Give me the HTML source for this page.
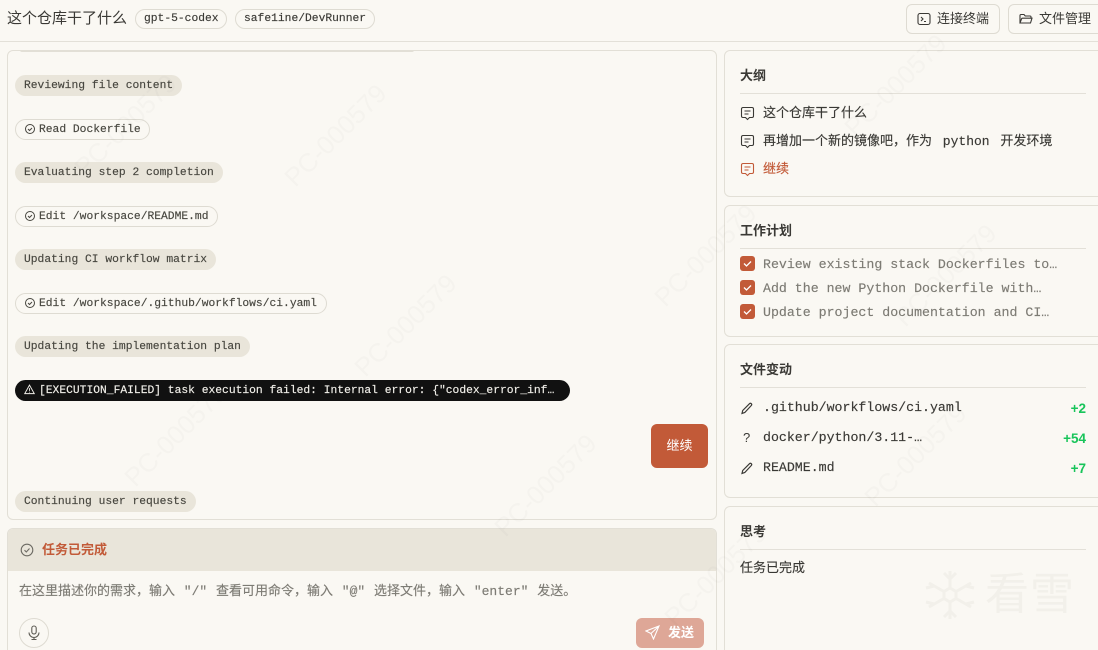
<!DOCTYPE html>
<html lang="zh">
<head>
<meta charset="utf-8">
<title>这个仓库干了什么</title>
<style>
html,body{margin:0;padding:0;width:1098px;height:650px;overflow:hidden;background:#faf8f3}
body{color:#3a3935;font-family:"Liberation Sans","Noto Sans CJK SC",sans-serif}
#root{position:relative;width:1098px;height:650px;overflow:hidden;background:#faf8f3}
*{box-sizing:border-box}
.a{position:absolute}
.t{position:absolute;white-space:pre;line-height:20px}
.m{font-family:"Liberation Mono","Noto Sans CJK SC",monospace;-webkit-text-stroke:.15px currentColor}
.panel{position:absolute;background:#faf8f3;border:1px solid #e2dfd6;border-radius:6px}
.pill{position:absolute;height:21px;border-radius:11px;font:11.3px/23px "Liberation Mono",monospace;white-space:pre;padding-left:9px;color:#47463f;-webkit-text-stroke:.15px currentColor}
.g{background:#e9e5da}
.o{border:1px solid #dedbd2;background:#faf8f3;line-height:21px;padding-left:23px}
.o svg{position:absolute;left:8px;top:3px}
.h{position:absolute;left:740px;font-size:13px;font-weight:bold;line-height:20px;color:#3a3935}
.hr{position:absolute;left:740px;width:346px;height:1px;background:#e3e0d8}
.r{position:absolute;left:763px;font:13.25px/20px "Liberation Mono","Noto Sans CJK SC",monospace;white-space:pre;-webkit-text-stroke:.15px currentColor}
.gr{color:#7d7b74}
.chk{position:absolute;left:740px;width:15px;height:15px;background:#c25a38;border-radius:3px}
.num{position:absolute;right:12px;font:bold 13.5px/20px "Liberation Sans",sans-serif;color:#18c45a}
.btn{position:absolute;top:4px;height:30px;background:#faf8f3;border:1px solid #dedbd2;border-radius:6px;font-size:13px;line-height:28px;color:#3a3935;white-space:pre}
.wm{position:absolute;font:26px "Liberation Sans",sans-serif;color:rgba(90,80,60,.028);transform:rotate(-45deg);white-space:pre;z-index:5;pointer-events:none}
</style>
</head>
<body>
<div id="root">
<!-- header -->
<div class="t" style="left:7px;top:9px;font-size:15px">这个仓库干了什么</div>
<div class="a m" style="left:135px;top:9px;width:92px;height:20px;border:1px solid #dedbd2;border-radius:10px;font-size:11.3px;line-height:19px;padding-left:8px;white-space:pre">gpt-5-codex</div>
<div class="a m" style="left:235px;top:9px;width:140px;height:20px;border:1px solid #dedbd2;border-radius:10px;font-size:11.3px;line-height:19px;padding-left:8px;white-space:pre">safe1ine/DevRunner</div>
<div class="btn" style="left:906px;width:94px;padding-left:30px">连接终端
<svg class="a" style="left:10px;top:7px" width="14" height="14" viewBox="0 0 14 14" fill="none" stroke="#3a3935" stroke-width="1.1"><rect x="1" y="1.5" width="12" height="11" rx="2"/><path d="M4 5l2 2-2 2M7 9.5h2"/></svg></div>
<div class="btn" style="left:1008px;width:100px;padding-left:30px">文件管理
<svg class="a" style="left:10px;top:7px" width="14" height="14" viewBox="0 0 14 14" fill="none" stroke="#3a3935" stroke-width="1.1"><path d="M1 11V3.500a1 1 0 0 1 1-1h3l1.200 1.500H11a1 1 0 0 1 1 1v1M1 11l1.500-4a1 1 0 0 1 1-.8H13l-1.500 4.800H2z"/></svg></div>
<div class="a" style="left:0;top:41px;width:1098px;height:1px;background:#e3e0d8"></div>

<!-- message panel -->
<div class="panel" style="left:7px;top:50px;width:710px;height:470px"></div>
<div class="a" style="left:20px;top:50px;width:394px;height:2px;border-bottom:1px solid #e2dfd6;border-radius:0 0 6px 6px"></div>

<div class="pill g" style="left:15px;top:75px;width:167px">Reviewing file content</div>
<div class="pill o" style="left:15px;top:119px;width:135px"><svg width="12" height="12" viewBox="0 0 12 12" fill="none" stroke="#47463f"><circle cx="6" cy="6" r="4.500"/><path d="M4 6l1.500 1.500L8 5"/></svg>Read Dockerfile</div>
<div class="pill g" style="left:15px;top:162px;width:208px">Evaluating step 2 completion</div>
<div class="pill o" style="left:15px;top:206px;width:203px"><svg width="12" height="12" viewBox="0 0 12 12" fill="none" stroke="#47463f"><circle cx="6" cy="6" r="4.500"/><path d="M4 6l1.500 1.500L8 5"/></svg>Edit /workspace/README.md</div>
<div class="pill g" style="left:15px;top:249px;width:201px">Updating CI workflow matrix</div>
<div class="pill o" style="left:15px;top:293px;width:312px"><svg width="12" height="12" viewBox="0 0 12 12" fill="none" stroke="#47463f"><circle cx="6" cy="6" r="4.500"/><path d="M4 6l1.500 1.500L8 5"/></svg>Edit /workspace/.github/workflows/ci.yaml</div>
<div class="pill g" style="left:15px;top:336px;width:235px">Updating the implementation plan</div>
<div class="pill" style="left:15px;top:380px;width:555px;background:#111;color:#f2f0ea;padding-left:24px">[EXECUTION_FAILED] task execution failed: Internal error: {"codex_error_inf…<svg class="a" style="left:9px;top:4px" width="11" height="11" viewBox="0 0 12 12" fill="none" stroke="#f2f0ea"><path d="M6 1.200L11.200 10.500H.8zM6 4.500v3M6 8.500v.8"/></svg></div>
<div class="a" style="left:651px;top:424px;width:57px;height:44px;background:#c25a38;border-radius:6px;color:#fff;font-size:13px;line-height:44px;text-align:center">继续</div>
<div class="pill g" style="left:15px;top:491px;width:181px">Continuing user requests</div>

<!-- composer -->
<div class="panel" style="left:7px;top:528px;width:710px;height:140px;overflow:hidden">
  <div class="a" style="left:0;top:0;width:708px;height:42px;background:#e9e5da"></div>
</div>
<svg class="a" style="left:20px;top:543px" width="14" height="14" viewBox="0 0 14 14" fill="none" stroke="#6d6b64" stroke-width="1.100"><circle cx="7" cy="7" r="5.800"/><path d="M4.500 7.200l1.800 1.800 3.200-3.500"/></svg>
<div class="t" style="left:42px;top:540px;font-size:13px;font-weight:bold;color:#c25a38">任务已完成</div>
<div class="t m" style="left:19px;top:582px;font-size:13px;color:#7d7b74;word-spacing:1px">在这里描述你的需求，输入 "/" 查看可用命令，输入 "@" 选择文件，输入 "enter" 发送。</div>
<div class="a" style="left:19px;top:618px;width:30px;height:30px;border:1px solid #dedbd2;border-radius:50%"></div>
<svg class="a" style="left:27px;top:625px" width="14" height="16" viewBox="0 0 14 16" fill="none" stroke="#5e5c55" stroke-width="1.100"><rect x="4.800" y="1" width="4.400" height="8" rx="2.200"/><path d="M2 7.500a5 5 0 0 0 10 0M7 12.500v2M4.500 14.500h5"/></svg>
<div class="a" style="left:636px;top:618px;width:68px;height:30px;background:#dea797;border-radius:6px;color:#fff;font-size:13px;font-weight:bold;line-height:30px;padding-left:32px">发送</div>
<svg class="a" style="left:645px;top:625px" width="15" height="15" viewBox="0 0 15 15" fill="none" stroke="#fff" stroke-width="1.100"><path d="M14 1L1 6l5 2.500L8.500 14zM14 1L6 8.500"/></svg>

<!-- outline -->
<div class="panel" style="left:724px;top:50px;width:390px;height:147px"></div>
<div class="h" style="top:66px">大纲</div>
<div class="hr" style="top:93px"></div>
<svg class="a" style="left:740px;top:106px" width="15" height="15" viewBox="0 0 15 15" fill="none" stroke="#3a3935" stroke-width="1.100"><path d="M3 1.500h9a1.500 1.500 0 0 1 1.500 1.500v7a1.500 1.500 0 0 1-1.500 1.500H9.500l-2 2-2-2H3A1.500 1.500 0 0 1 1.500 10V3A1.500 1.500 0 0 1 3 1.500zM4.500 5h6M4.500 8h4"/></svg>
<div class="r" style="top:104px;font-size:13px">这个仓库干了什么</div>
<svg class="a" style="left:740px;top:134px" width="15" height="15" viewBox="0 0 15 15" fill="none" stroke="#3a3935" stroke-width="1.100"><path d="M3 1.500h9a1.500 1.500 0 0 1 1.500 1.500v7a1.500 1.500 0 0 1-1.500 1.500H9.500l-2 2-2-2H3A1.500 1.500 0 0 1 1.500 10V3A1.500 1.500 0 0 1 3 1.500zM4.500 5h6M4.500 8h4"/></svg>
<div class="r" style="top:132px;font-size:13px;word-spacing:3px">再增加一个新的镜像吧，作为 python 开发环境</div>
<svg class="a" style="left:740px;top:162px" width="15" height="15" viewBox="0 0 15 15" fill="none" stroke="#c25a38" stroke-width="1.100"><path d="M3 1.500h9a1.500 1.500 0 0 1 1.500 1.500v7a1.500 1.500 0 0 1-1.500 1.500H9.500l-2 2-2-2H3A1.500 1.500 0 0 1 1.500 10V3A1.500 1.500 0 0 1 3 1.500zM4.500 5h6M4.500 8h4"/></svg>
<div class="r" style="top:160px;font-size:13px;color:#c25a38">继续</div>

<!-- plan -->
<div class="panel" style="left:724px;top:205px;width:390px;height:132px"></div>
<div class="h" style="top:221px">工作计划</div>
<div class="hr" style="top:248px"></div>
<div class="chk" style="top:256px"><svg width="15" height="15" viewBox="0 0 15 15" fill="none" stroke="#fff" stroke-width="1.300"><path d="M4 7.500l2.500 2.500L11 5.500"/></svg></div>
<div class="r gr" style="top:255px">Review existing stack Dockerfiles to…</div>
<div class="chk" style="top:280px"><svg width="15" height="15" viewBox="0 0 15 15" fill="none" stroke="#fff" stroke-width="1.300"><path d="M4 7.500l2.500 2.500L11 5.500"/></svg></div>
<div class="r gr" style="top:279px">Add the new Python Dockerfile with…</div>
<div class="chk" style="top:304px"><svg width="15" height="15" viewBox="0 0 15 15" fill="none" stroke="#fff" stroke-width="1.300"><path d="M4 7.500l2.500 2.500L11 5.500"/></svg></div>
<div class="r gr" style="top:303px">Update project documentation and CI…</div>

<!-- file changes -->
<div class="panel" style="left:724px;top:344px;width:390px;height:154px"></div>
<div class="h" style="top:360px">文件变动</div>
<div class="hr" style="top:387px"></div>
<svg class="a" style="left:740px;top:401px" width="14" height="14" viewBox="0 0 14 14" fill="none" stroke="#3a3935" stroke-width="1.200"><path d="M2 12.500l.7-3L9.500 2.700a1.300 1.300 0 0 1 1.800 0 1.300 1.300 0 0 1 0 1.800L4.800 11.500z"/></svg>
<div class="r" style="top:398px">.github/workflows/ci.yaml</div>
<div class="num" style="top:399px">+2</div>
<div class="t" style="left:743px;top:428px;font-size:13px;color:#3a3935">?</div>
<div class="r" style="top:428px">docker/python/3.11-…</div>
<div class="num" style="top:429px">+54</div>
<svg class="a" style="left:740px;top:461px" width="14" height="14" viewBox="0 0 14 14" fill="none" stroke="#3a3935" stroke-width="1.200"><path d="M2 12.500l.7-3L9.500 2.700a1.300 1.300 0 0 1 1.800 0 1.300 1.300 0 0 1 0 1.800L4.800 11.500z"/></svg>
<div class="r" style="top:458px">README.md</div>
<div class="num" style="top:459px">+7</div>

<!-- thinking -->
<div class="panel" style="left:724px;top:506px;width:390px;height:160px"></div>
<div class="h" style="top:522px">思考</div>
<div class="hr" style="top:549px"></div>
<div class="r" style="left:740px;top:559px;font-size:13px">任务已完成</div>

<!-- logo watermark -->
<svg class="a" style="left:922px;top:567px" width="56" height="56" viewBox="0 0 56 56" fill="none" stroke="#f2f0ea" stroke-width="3"><path d="M28 4v48M7 16l42 24M7 40l42-24M28 12l-6-6M28 12l6-6M28 44l-6 6M28 44l6 6M12 19l-8 2M12 37l-8-2M44 19l8 2M44 37l8-2"/><path d="M28 21l6 3.500v7L28 35l-6-3.500v-7z" fill="#faf8f3"/></svg>
<div class="t" style="left:985px;top:570px;font-size:44px;line-height:50px;color:#f2f0ea;letter-spacing:1px">看雪</div>

<!-- faint watermarks -->
<div class="wm" style="left:60px;top:110px">PC-000579</div>
<div class="wm" style="left:270px;top:120px">PC-000579</div>
<div class="wm" style="left:340px;top:310px">PC-000579</div>
<div class="wm" style="left:110px;top:420px">PC-000579</div>
<div class="wm" style="left:480px;top:470px">PC-000579</div>
<div class="wm" style="left:640px;top:240px">PC-000579</div>
<div class="wm" style="left:830px;top:70px">PC-000579</div>
<div class="wm" style="left:880px;top:260px">PC-000579</div>
<div class="wm" style="left:850px;top:440px">PC-000579</div>
<div class="wm" style="left:650px;top:560px">PC-000579</div>
</div>
</body>
</html>
